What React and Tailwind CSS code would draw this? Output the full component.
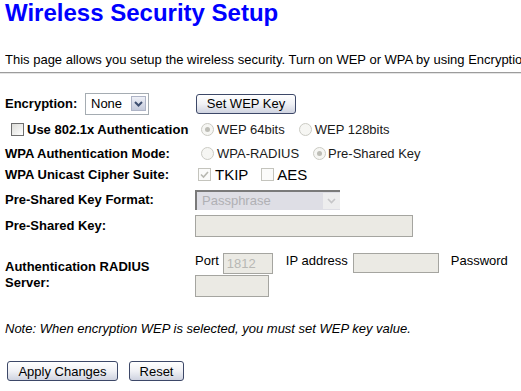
import React from 'react';

function Radio({ checked, className = '' }) {
  return (
    <span className={`inline-flex h-[13px] w-[13px] shrink-0 items-center justify-center rounded-full border border-[#cbcbc4] bg-[#f6f6f3] ${className}`}>
      {checked && <span className="h-[5px] w-[5px] rounded-full bg-[#bdbdb6]" />}
    </span>
  );
}

function Check({ checked, disabled, className = '' }) {
  const box = disabled
    ? 'border-[#c4c4bd] bg-[#fbfbfa]'
    : 'border-[#6e6e6e] bg-linear-to-br from-[#dcdcd8] to-white';
  return (
    <span className={`inline-flex h-[13px] w-[13px] shrink-0 items-center justify-center border ${box} ${className}`}>
      {checked && (
        <svg viewBox="0 0 11 11" className="h-[11px] w-[11px]">
          <path d="M2 5.5l2.5 2.5L9 3" fill="none" stroke="#b8b8b1" strokeWidth="1.6" />
        </svg>
      )}
    </span>
  );
}

function Button({ children, className = '' }) {
  return (
    <button
      type="button"
      className={`flex h-[20px] items-center rounded-[3px] border border-[#3d4868] bg-linear-to-b from-white via-[#f0f1f5] to-[#cfd3e0] text-[13px] leading-none text-black ${className}`}
    >
      {children}
    </button>
  );
}

function Field({ value = '', className = '' }) {
  return (
    <input
      disabled
      defaultValue={value}
      className={`border border-[#a5a5a0] bg-[#ebeae4] px-[3px] text-[13px] text-[#b8b8b4] ${className}`}
    />
  );
}

export default function App() {
  return (
    <div className="min-h-[391px] w-[521px] overflow-hidden bg-white font-['Liberation_Sans',Arial,sans-serif] text-[13px] leading-[15px] text-black">
      <div className="pl-[5px]">
        <h1 className="pt-[1px] text-[24px] font-bold leading-[24px] text-[#0000ff]">Wireless Security Setup</h1>
        <p className="mt-[27px] overflow-hidden whitespace-nowrap">
          This page allows you setup the wireless security. Turn on WEP or WPA by using Encryption Keys could prevent any unauthorized access to your wireless network.
        </p>
      </div>
      <div className="mt-[5px] h-[2px] border-t border-b border-t-[#9c9c9c] border-b-[#e4e4e4]" />

      <div className="mt-[17px] pl-[5px]">
        {/* Encryption */}
        <div className="flex h-[25px] items-center">
          <div className="flex w-[190px] items-center">
            <span className="w-[80px] font-bold">Encryption:</span>
            <div className="flex h-[22px] w-[64px] items-center justify-between border border-[#a5acb2] bg-white pl-[5px] pr-[2px]">
              <span>None</span>
              <span className="flex h-[15px] w-[15px] items-center justify-center border border-[#aeb4c6] bg-linear-to-b from-[#eef0f7] to-[#c4cadb]">
                <svg viewBox="0 0 9 6" className="h-[6px] w-[9px]">
                  <path d="M1 1l3.5 3.5L8 1" fill="none" stroke="#3e4f70" strokeWidth="2" />
                </svg>
              </span>
            </div>
          </div>
          <Button className="ml-[1px] w-[100px] justify-center">Set WEP Key</Button>
        </div>

        {/* 802.1x */}
        <div className="flex h-[27px] items-center">
          <div className="flex w-[190px] items-center">
            <Check className="ml-[6px]" />
            <span className="ml-[3px] font-bold">Use 802.1x Authentication</span>
          </div>
          <div className="flex items-center text-[#1a1a1a]">
            <Radio checked className="ml-[6px]" />
            <span className="ml-[3px]">WEP 64bits</span>
            <Radio className="ml-[14px]" />
            <span className="ml-[3px]">WEP 128bits</span>
          </div>
        </div>

        {/* WPA mode */}
        <div className="flex h-[20px] items-center">
          <div className="w-[190px] font-bold">WPA Authentication Mode:</div>
          <div className="flex items-center text-[#1a1a1a]">
            <Radio className="ml-[6px]" />
            <span className="ml-[3px]">WPA-RADIUS</span>
            <Radio checked className="ml-[14px]" />
            <span className="ml-[2px]">Pre-Shared Key</span>
          </div>
        </div>

        {/* Cipher */}
        <div className="flex h-[23px] items-center">
          <div className="w-[190px] font-bold">WPA Unicast Cipher Suite:</div>
          <div className="flex items-center text-[15px] leading-[17px]">
            <Check checked disabled className="ml-[3px]" />
            <span className="ml-[4px]">TKIP</span>
            <Check disabled className="ml-[13px]" />
            <span className="ml-[3px]">AES</span>
          </div>
        </div>

        {/* Key format */}
        <div className="flex h-[27px] items-center">
          <div className="w-[190px] font-bold">Pre-Shared Key Format:</div>
          <div className="flex h-[20px] w-[145px] items-center justify-between border-t-2 border-l-2 border-t-[#7a7a7a] border-l-[#7a7a7a] bg-[#dedee5] pl-[5px]">
            <span className="text-[#b0b0b4]">Passphrase</span>
            <span className="flex h-[16px] w-[17px] items-center justify-center bg-[#ededee]">
              <svg viewBox="0 0 9 6" className="h-[6px] w-[9px]">
                <path d="M1 1l3.5 3.5L8 1" fill="none" stroke="#c6c6c8" strokeWidth="1.6" />
              </svg>
            </span>
          </div>
        </div>

        {/* Key */}
        <div className="flex h-[25px] items-center">
          <div className="w-[190px] font-bold">Pre-Shared Key:</div>
          <Field className="h-[22px] w-[218px]" />
        </div>

        {/* RADIUS */}
        <div className="mt-[15px] flex h-[44px] items-center">
          <div className="w-[190px] font-bold leading-[16px]">
            Authentication RADIUS
            <br />
            Server:
          </div>
          <div className="flex h-[44px] flex-col">
            <div className="flex items-start">
              <span>Port</span>
              <Field value="1812" className="ml-[4px] h-[21px] w-[50px]" />
              <span className="ml-[13px]">IP address</span>
              <Field className="ml-[5px] h-[20px] w-[86px]" />
              <span className="ml-[12px]">Password</span>
            </div>
            <Field className="mt-[1px] h-[22px] w-[74px]" />
          </div>
        </div>

        <p className="mt-[24px] italic">Note: When encryption WEP is selected, you must set WEP key value.</p>

        <div className="mt-[25px] flex items-center">
          <Button className="ml-[2px] w-[111px] justify-center">Apply Changes</Button>
          <Button className="ml-[11px] w-[55px] justify-center">Reset</Button>
        </div>
      </div>
    </div>
  );
}
